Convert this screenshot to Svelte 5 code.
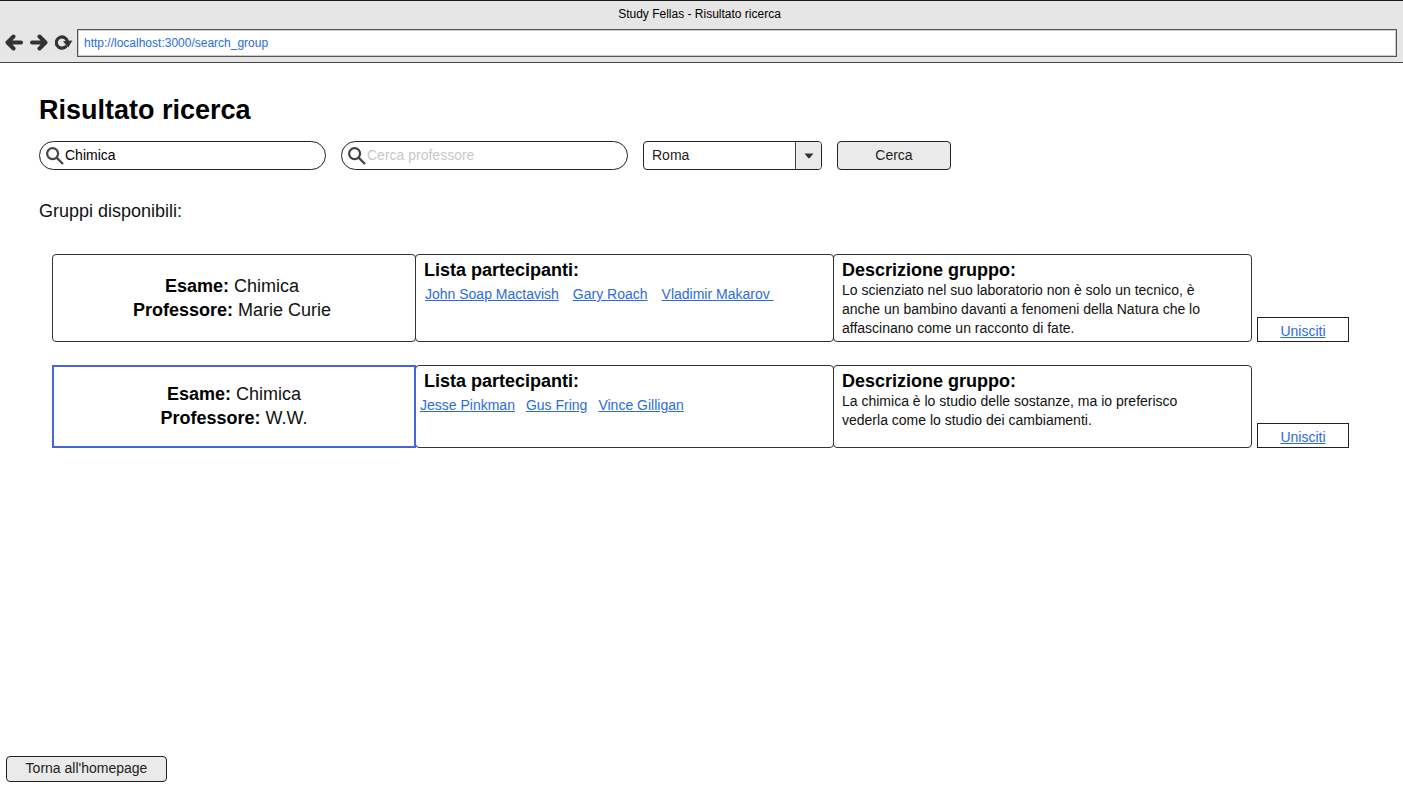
<script>
  let exam = $state('Chimica');
  let professor = $state('');
  let city = $state('Roma');

  const groups = [
    {
      exam: 'Chimica',
      professor: 'Marie Curie',
      members: ['John Soap Mactavish', 'Gary Roach', 'Vladimir Makarov\u00a0'],
      description:
        'Lo scienziato nel suo laboratorio non è solo un tecnico, è anche un bambino davanti a fenomeni della Natura che lo affascinano come un racconto di fate.',
      selected: false
    },
    {
      exam: 'Chimica',
      professor: 'W.W.',
      members: ['Jesse Pinkman', 'Gus Fring', 'Vince Gilligan'],
      description:
        'La chimica è lo studio delle sostanze, ma io preferisco vederla come lo studio dei cambiamenti.',
      selected: true
    }
  ];
</script>

{#snippet magnifier()}
  <svg class="magnifier" viewBox="0 0 18 18" width="18" height="18" aria-hidden="true">
    <circle cx="6.6" cy="6.6" r="5.5" />
    <path d="M10.6 10.6 L17 17" />
  </svg>
{/snippet}

<div class="window">
  <header>
    <div class="title">Study Fellas - Risultato ricerca</div>
    <div class="toolbar">
      <button class="nav" aria-label="Indietro">
        <svg viewBox="0 0 18 18" width="18" height="18"><path d="M16 8.5 H3 M8.5 2.5 L2.5 8.5 L8.5 14.5" /></svg>
      </button>
      <button class="nav" aria-label="Avanti">
        <svg viewBox="0 0 18 18" width="18" height="18"><path d="M2 8.5 H15 M9.5 2.5 L15.5 8.5 L9.5 14.5" /></svg>
      </button>
      <button class="nav" aria-label="Ricarica">
        <svg viewBox="0 0 18 18" width="18" height="18">
          <path class="ring" d="M10.6 12.8 A5.6 5.6 0 1 1 12.4 7.4" />
          <path class="solid" d="M8 7.2 L17.4 6.6 L13.2 13.6 Z" />
        </svg>
      </button>
      <input class="address" type="text" aria-label="Indirizzo" value="http://localhost:3000/search_group" />
    </div>
  </header>

  <main>
    <h1>Risultato ricerca</h1>
    <form class="filters" onsubmit={(e) => e.preventDefault()}>
      <label class="search">
        {@render magnifier()}
        <input type="text" aria-label="Esame" bind:value={exam} />
      </label>
      <label class="search">
        {@render magnifier()}
        <input type="text" aria-label="Professore" placeholder="Cerca professore" bind:value={professor} />
      </label>
      <div class="select">
        <select aria-label="Città" bind:value={city}>
          <option>Roma</option>
        </select>
        <span class="arrow"><svg viewBox="0 0 10 6" width="10" height="6" aria-hidden="true"><path d="M0.5 0.5 H9.5 L5.8 5 Q5 5.8 4.2 5 Z" /></svg></span>
      </div>
      <button class="button submit">Cerca</button>
    </form>

    <p class="intro">Gruppi disponibili:</p>

    <section class="groups">
      {#each groups as group}
        <article class="group">
          <div class="cell exam" class:selected={group.selected}>
            <div><b>Esame:</b> {group.exam}</div>
            <div><b>Professore:</b> {group.professor}</div>
          </div>
          <div class="cell">
            <h2>Lista partecipanti:</h2>
            <div class="members" class:compact={group.selected}>
              {#each group.members as member}
                <a href="#profilo">{member}</a>
              {/each}
            </div>
          </div>
          <div class="cell">
            <h2>Descrizione gruppo:</h2>
            <p>{group.description}</p>
          </div>
          <a class="join" href="#unisciti">Unisciti</a>
        </article>
      {/each}
    </section>
  </main>

  <footer>
    <button class="button home">Torna all'homepage</button>
  </footer>
</div>

<style>
  :global(body) {
    margin: 0;
    background: #fff;
  }
  .window {
    display: flex;
    flex-direction: column;
    min-height: 100vh;
    box-sizing: border-box;
    font-family: 'Liberation Sans', Arial, sans-serif;
    font-size: 14px;
    line-height: 19px;
    color: #111;
  }
  .window :global(*) {
    box-sizing: border-box;
  }
  input,
  select,
  button {
    font: inherit;
    color: inherit;
    margin: 0;
  }
  header {
    background: #e6e6e6;
    border-top: 1px solid #1a1a1a;
    border-bottom: 1px solid #444;
  }
  .title {
    padding: 4px 4px 0 0;
    height: 28px;
    font-size: 12px;
    line-height: 18px;
    text-align: center;
    color: #000;
  }
  .toolbar {
    display: flex;
    align-items: center;
    padding: 0 6px 5px 5px;
  }
  .nav {
    display: flex;
    padding: 0;
    margin-right: 7px;
    border: 0;
    background: none;
  }
  .nav:nth-child(3) {
    margin-right: 4px;
  }
  .nav path {
    fill: none;
    stroke: #333;
    stroke-width: 4;
    stroke-linecap: round;
    stroke-linejoin: round;
  }
  .nav .ring {
    stroke-width: 3.2;
  }
  .nav .solid {
    fill: #333;
    stroke: none;
  }
  .address {
    flex: 1;
    height: 28px;
    padding: 0 6px 1px;
    border: 1px solid #555;
    box-shadow: inset 0 0 0 1px #ccc;
    background: #fff;
    font-size: 12px;
    color: #2a6cdd;
    border-radius: 0;
  }
  main {
    padding: 0 39px;
  }
  h1 {
    margin: 31px 0 0;
    font-size: 27px;
    line-height: 32px;
    color: #000;
  }
  .filters {
    display: flex;
    gap: 15px;
    margin-top: 15px;
    height: 29px;
  }
  .search {
    display: flex;
    align-items: center;
    flex: 0 1 287px;
    padding-left: 6px;
    border: 1px solid #222;
    border-radius: 15px;
  }
  .search input {
    flex: 1;
    min-width: 0;
    padding: 0 0 1px;
    margin-left: 1px;
    border: 0;
    outline: 0;
    background: none;
    color: #000;
  }
  .search input::placeholder {
    color: #c8c8c8;
    opacity: 1;
  }
  .magnifier {
    flex: none;
    fill: none;
    stroke: #444;
    stroke-width: 2.2;
  }
  .select {
    position: relative;
    flex: 0 1 179px;
  }
  .select select {
    width: 100%;
    height: 29px;
    padding: 0 36px 1px 8px;
    border: 1px solid #222;
    border-radius: 4px;
    appearance: none;
    background: #fff;
    color: #222;
  }
  .arrow {
    position: absolute;
    top: 1px;
    right: 1px;
    bottom: 1px;
    width: 26px;
    display: flex;
    align-items: center;
    justify-content: center;
    border-left: 1px solid #444;
    border-radius: 0 3px 3px 0;
    background: #eaeaea;
    pointer-events: none;
  }
  .arrow path {
    fill: #333;
  }
  .button {
    padding: 0 16px 1px;
    border: 1px solid #222;
    border-radius: 4px;
    background: #eaeaea;
    color: #222;
  }
  .submit {
    flex: 0 1 114px;
  }
  .intro {
    margin: 29px 0 0;
    font-size: 18px;
    line-height: 24px;
  }
  .groups {
    display: flex;
    flex-direction: column;
    gap: 23px;
    padding: 31px 15px 0 13px;
  }
  .group {
    display: grid;
    grid-template-columns: 363fr 418fr 418fr 98px;
    min-height: 83px;
  }
  .cell {
    padding: 5px 32px 3px 8px;
    margin-right: -1px;
    border: 1px solid #333;
    border-radius: 4px;
  }
  .exam {
    display: flex;
    flex-direction: column;
    justify-content: center;
    padding: 0 4px 0 0;
    font-size: 18px;
    line-height: 24px;
    text-align: center;
  }
  .selected {
    z-index: 1;
    padding: 0 0 2px;
    border: 2px solid #4666d8;
    border-radius: 0;
  }
  b,
  h2 {
    color: #000;
  }
  h2 {
    margin: 0;
    font-size: 18px;
    line-height: 21px;
  }
  .cell p {
    margin: 0;
  }
  a {
    color: #2a6cdd;
  }
  .members {
    display: flex;
    gap: 14px;
    margin-top: 4px;
    padding-left: 1px;
    white-space: nowrap;
  }
  .compact {
    gap: 11px;
    margin-left: -4px;
    padding-left: 0;
  }
  .join {
    align-self: end;
    margin-left: 6px;
    height: 25px;
    border: 1px solid #222;
    line-height: 26px;
    text-align: center;
  }
  footer {
    margin-top: auto;
    padding: 24px 6px 7px;
  }
  .home {
    display: block;
    width: 161px;
    height: 26px;
  }
</style>
